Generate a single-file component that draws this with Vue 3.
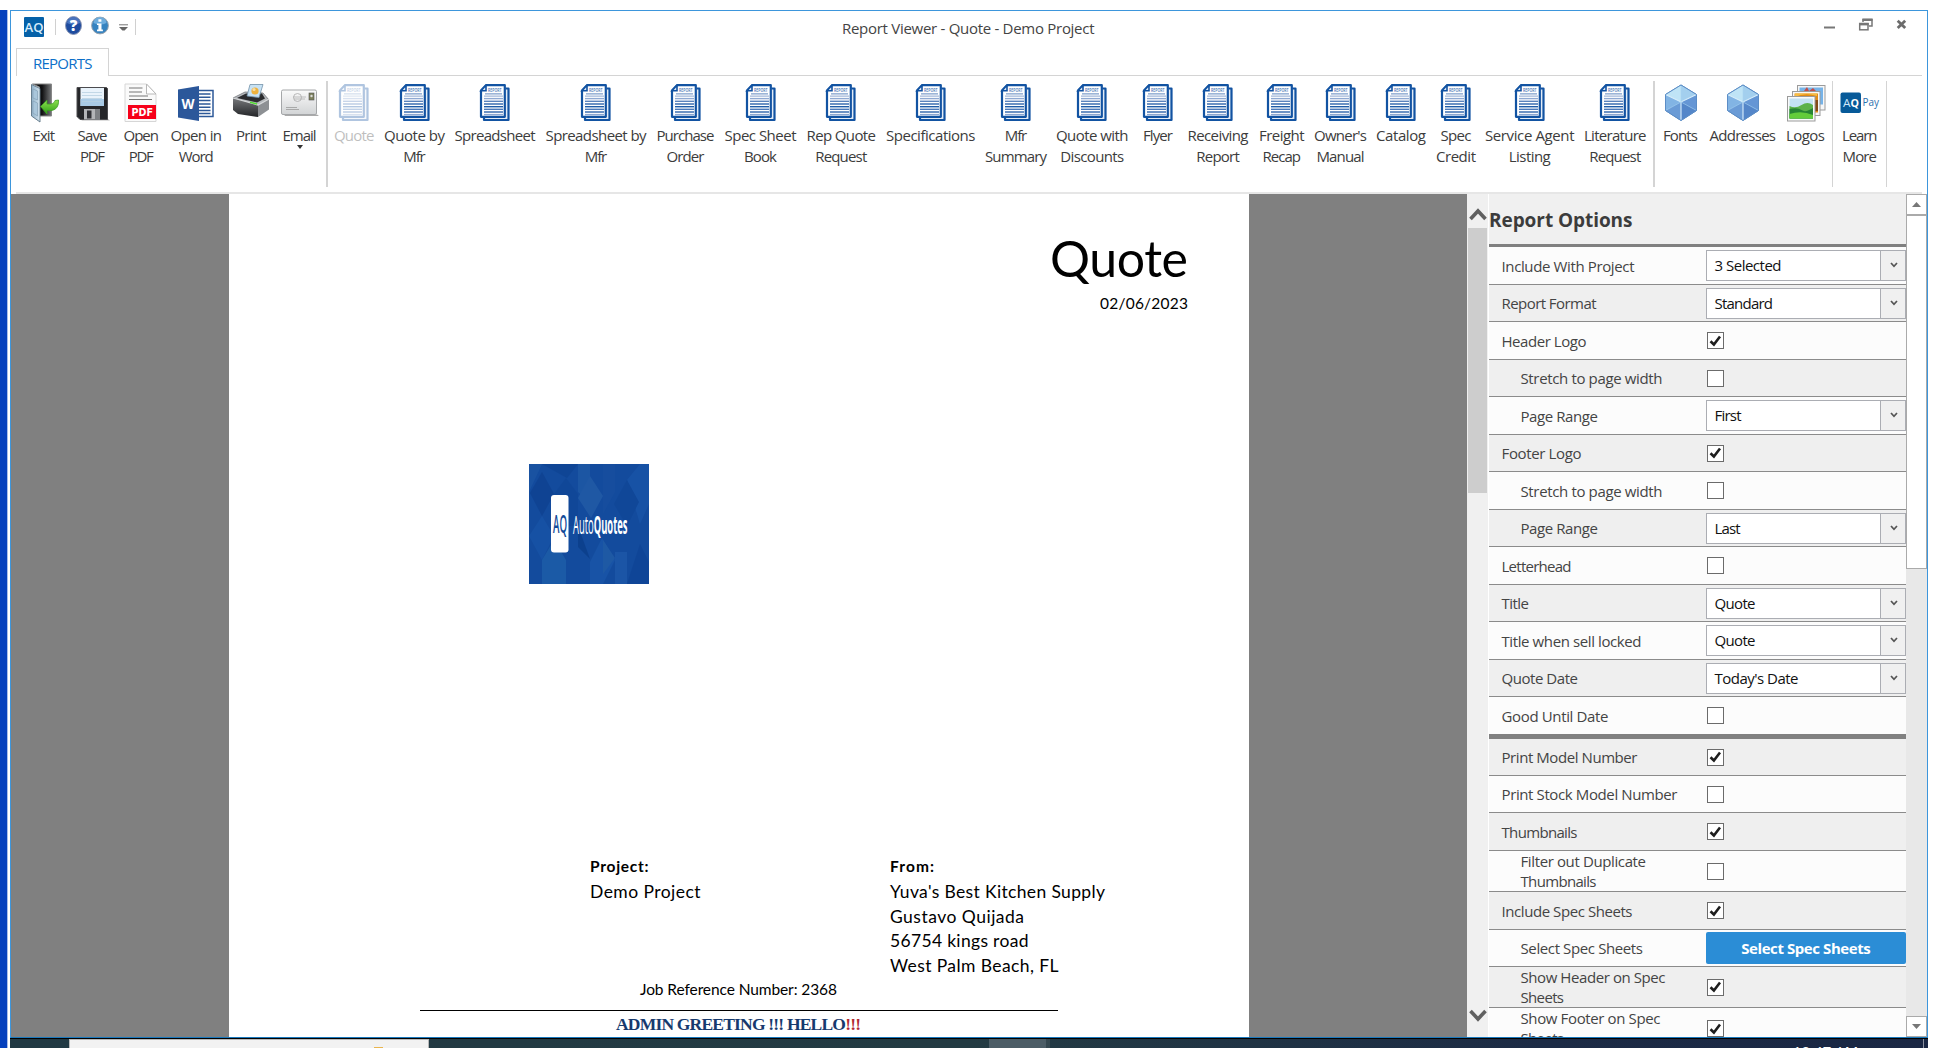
<script setup>
// Fits a line of text to a width in px by adjusting the letter spacing.
const vFit = {
  mounted(el, { value }) {
    if (!value) return
    const n = el.textContent.length
    const w = el.getBoundingClientRect().width
    const ls = (value - w) / Math.max(1, n - 1)
    el.style.letterSpacing = ls + 'px'
    el.style.marginRight = -ls + 'px'
  }
}

const raw = [
  { i: 'exit', x: 32.5, t: [['Exit', 22.5]] },
  { i: 'save', x: 77.5, t: [['Save', 30], ['PDF', 25]] },
  { i: 'pdf', x: 123.5, t: [['Open', 35.5], ['PDF', 25]] },
  { i: 'word', x: 170.5, t: [['Open in', 51.5], ['Word', 35]] },
  { i: 'print', x: 236, t: [['Print', 30.5]] },
  { i: 'mail', x: 282.5, t: [['Email', 34]], drop: true },
  { sep: 2, x: 326 },
  { i: 'report', x: 334, t: [['Quote', 40.5]], off: true },
  { i: 'report', x: 384, t: [['Quote by', 61], ['Mfr', 22.5]] },
  { i: 'report', x: 454.5, t: [['Spreadsheet', 81]] },
  { i: 'report', x: 545.5, t: [['Spreadsheet by', 101], ['Mfr', 22.5]] },
  { i: 'report', x: 656.5, t: [['Purchase', 58], ['Order', 38]] },
  { i: 'report', x: 724.5, t: [['Spec Sheet', 72], ['Book', 33]] },
  { i: 'report', x: 806.5, t: [['Rep Quote', 69.5], ['Request', 52]] },
  { i: 'report', x: 886, t: [['Specifications', 89.5]] },
  { i: 'report', x: 985, w: 62, t: [['Mfr', 22.5], ['Summary', 62]] },
  { i: 'report', x: 1056, t: [['Quote with', 72.5], ['Discounts', 64]] },
  { i: 'report', x: 1143, t: [['Flyer', 30]] },
  { i: 'report', x: 1187.5, t: [['Receiving', 61], ['Report', 43.5]] },
  { i: 'report', x: 1259, t: [['Freight', 45.5], ['Recap', 38.5]] },
  { i: 'report', x: 1314, t: [["Owner's", 53], ['Manual', 48]] },
  { i: 'report', x: 1376, t: [['Catalog', 50]] },
  { i: 'report', x: 1436, w: 40, t: [['Spec', 31], ['Credit', 40]] },
  { i: 'report', x: 1485, t: [['Service Agent', 89.5], ['Listing', 42]] },
  { i: 'report', x: 1584, t: [['Literature', 62.5], ['Request', 52]] },
  { sep: 2, x: 1653 },
  { i: 'cube', x: 1663, t: [['Fonts', 35]] },
  { i: 'cube', x: 1709.5, t: [['Addresses', 66.5]] },
  { i: 'logos', x: 1786, t: [['Logos', 39]] },
  { sep: 1, x: 1832 },
  { i: 'pay', x: 1842, t: [['Learn', 35.5], ['More', 34.5]] },
  { sep: 1, x: 1886 }
]
let edge = 11
const ribbon = raw.map(r => {
  const w = r.sep || r.w || r.t[0][1]
  const gap = r.x - edge
  edge = r.x + w
  return { ...r, width: w, gap }
})

const rows = [
  { h: 38, t: ['Include With Project'], w: [133], sel: '3 Selected', sw: 67 },
  { h: 37, t: ['Report Format'], w: [95], sel: 'Standard', sw: 58.5 },
  { h: 38, t: ['Header Logo'], w: [85], check: true },
  { h: 37, t: ['Stretch to page width'], w: [142], sub: true, check: false },
  { h: 38, t: ['Page Range'], w: [77.5], sub: true, sel: 'First', sw: 27 },
  { h: 37, t: ['Footer Logo'], w: [80], check: true },
  { h: 38, t: ['Stretch to page width'], w: [142], sub: true, check: false },
  { h: 37, t: ['Page Range'], w: [77.5], sub: true, sel: 'Last', sw: 26 },
  { h: 38, t: ['Letterhead'], w: [70], check: false },
  { h: 37, t: ['Title'], w: [27.5], sel: 'Quote', sw: 41 },
  { h: 38, t: ['Title when sell locked'], w: [140], sel: 'Quote', sw: 41 },
  { h: 37, t: ['Quote Date'], w: [76.5], sel: "Today's Date", sw: 84 },
  { h: 42, t: ['Good Until Date'], w: [107], check: false, thick: true },
  { h: 37, t: ['Print Model Number'], w: [136], check: true },
  { h: 37, t: ['Print Stock Model Number'], w: [176], check: false },
  { h: 38, t: ['Thumbnails'], w: [76], check: true },
  { h: 41, t: ['Filter out Duplicate', 'Thumbnails'], w: [125.5, 76], sub: true, check: false },
  { h: 38, t: ['Include Spec Sheets'], w: [131], check: true },
  { h: 37, t: ['Select Spec Sheets'], w: [122.5], sub: true, btn: true },
  { h: 41, t: ['Show Header on Spec', 'Sheets'], w: [145, 43.5], sub: true, check: true },
  { h: 42, t: ['Show Footer on Spec', 'Sheets'], w: [140, 43.5], sub: true, check: true }
].map((r, i) => ({ ...r, alt: i % 2 === 1 }))

const from = [["Yuva's Best Kitchen Supply", 215], ['Gustavo Quijada', 134], ['56754 kings road', 138.5], ['West Palm Beach, FL', 168.5]]

const textLines = [12, 14.6, 17.3, 20, 22.7, 25.3, 28, 30.6]
const lineTone = ['#5d86bd', '#8fa9d2', '#5a83bd', '#2d64ab', '#1f5ca8', '#4a79ba', '#2d64ab', '#8ba6d0']
</script>

<template>
  <div class="screen">
    <div class="above"></div>
    <div class="middle">
      <div class="desktop"></div>
      <div class="window">
        <header class="titlebar">
          <div class="quick">
            <svg class="app" width="20" height="20" viewBox="0 0 20 20">
              <rect width="20" height="20" rx="1" fill="#0561a8" />
              <text x="0.5" y="14.5" font-family="Open Sans, sans-serif" font-size="12.5" fill="#d6ecfb" textLength="19" lengthAdjust="spacingAndGlyphs" font-weight="600">AQ</text>
            </svg>
            <i class="qsep"></i>
            <svg class="help" width="17" height="19" viewBox="0 0 17 19">
              <ellipse cx="8.5" cy="9.5" rx="8" ry="9" fill="#1f4c9f" stroke="#8a96b4" />
              <path d="M2 7a6.5 6 0 0 1 13 0Q8 10 2 7Z" fill="#5d86cc" opacity=".7" />
              <text x="8.5" y="15" text-anchor="middle" font-family="Open Sans, sans-serif" font-weight="800" font-size="15" fill="#fff">?</text>
            </svg>
            <svg class="info" width="18" height="19" viewBox="0 0 18 19">
              <circle cx="9" cy="9.5" r="8.4" fill="#3683c0" stroke="#98a3ae" />
              <path d="M2.5 7a6.5 6 0 0 1 13 0Q9 10 2.5 7Z" fill="#7ab7e4" opacity=".8" />
              <path d="M7.4 3.2h3v2.6h-3zM6 7.4h4.5v6h1.4v1.8H6v-1.8h1.4V9.1H6z" fill="#fff" />
            </svg>
            <svg class="more" width="9" height="8" viewBox="0 0 9 8"><path d="M0 .8h9" stroke="#777" /><path d="M0 3h9L5.6 6.6H3.4z" fill="#666" /></svg>
            <i class="qsep q2"></i>
          </div>
          <span class="title"><span v-fit="252.5">Report Viewer - Quote - Demo Project</span></span>
          <div class="controls">
            <svg width="90" height="14" viewBox="0 0 90 14">
              <path d="M1 9.5h11" stroke="#777" stroke-width="2" />
              <path d="M40 4V1.5h9v6.5H46" fill="none" stroke="#777" stroke-width="1.5" /><path d="M39.5 1.8h10" stroke="#777" stroke-width="2.4" />
              <rect x="36.7" y="5.5" width="8.3" height="6.3" fill="#fff" stroke="#777" stroke-width="1.5" /><path d="M36 6.2h9.7" stroke="#777" stroke-width="2.4" />
              <path d="M74.7 2.8l7.5 7.2M82.2 2.8L74.7 10" stroke="#6c6c6c" stroke-width="2.8" />
            </svg>
          </div>
        </header>
        <div class="tabs">
          <div class="tab"><span v-fit="59.5">REPORTS</span></div>
          <div class="tabline"></div>
        </div>

        <nav class="ribbon">
          <template v-for="(r, k) in ribbon" :key="k">
            <i v-if="r.sep" class="sep" :style="{ width: r.width + 'px', marginLeft: r.gap + 'px' }"></i>
            <div v-else class="item" :class="{ off: r.off }" :style="{ width: r.width + 'px', marginLeft: r.gap + 'px' }">
              <svg v-if="r.i === 'report'" class="ic rep" width="32" height="38" viewBox="0 0 32 38">
                <path d="M5 33.5V36h24.5V4.5h-3" fill="#e4ecf6" stroke="#1253a2" stroke-width="2.2" stroke-linejoin="round" />
                <path d="M7 1.2h18.8v31.6H2V6.5z" fill="#fff" stroke="#1253a2" stroke-width="2.2" stroke-linejoin="round" />
                <path d="M7 1.2v5.5H2z" fill="#dce9f8" stroke="#1253a2" stroke-width="1.6" />
                <text x="9" y="8.3" font-family="Open Sans, sans-serif" font-weight="600" font-size="4.6" fill="#3d70b3" textLength="13.5" lengthAdjust="spacingAndGlyphs">REPORT</text>
                <path v-for="(y, n) in textLines" :key="n" :d="`M${n ? 5 : 6} ${n ? y : 9.9}h${n ? 19 : 17}`" :stroke="lineTone[n]" :stroke-width="n ? 1.4 : 1" />
                <path d="M5 12.1h19" stroke="#8aa5cf" stroke-width="1" />
              </svg>
              <svg v-else-if="r.i === 'exit'" class="ic" width="30" height="40" viewBox="0 0 30 40">
                <defs>
                  <linearGradient id="door" x1="0" x2="1" y1="0" y2="0"><stop offset="0" stop-color="#8fb0c8" /><stop offset="1" stop-color="#d3e3ee" /></linearGradient>
                  <linearGradient id="grn" x1="0" x2="0" y1="0" y2="1"><stop offset="0" stop-color="#8ee04e" /><stop offset="1" stop-color="#2da016" /></linearGradient>
                  <linearGradient id="room" x1="0" x2="1" y1="0" y2="0"><stop offset="0.5" stop-color="#101012" /><stop offset="1" stop-color="#77797b" /></linearGradient>
                </defs>
                <path d="M3.5 1h19v32h-12V4z" fill="url(#room)" stroke="#888" stroke-width="1" />
                <path d="M2.500 1.500l8.500 4v33.500l-8.500-6z" fill="url(#door)" stroke="#5c7485" stroke-width=".9" />
                <path d="M4 6l4.500 2v9l-4.500-2zM4 18l4.500 2v13l-4.500-3z" fill="#a9c6db" stroke="#7f9cb1" stroke-width=".6" />
                <path d="M11.500 23.500l6.500-6.500v4c5 .5 7-.5 8-3.500l3.500-.500c.5 8-4 11.500-11.500 10.500v3.500z" fill="url(#grn)" stroke="#3d9e23" stroke-width=".8" />
              </svg>
              <svg v-else-if="r.i === 'save'" class="ic" width="34" height="40" viewBox="0 0 34 40">
                <path d="M4 36h28l2 1.500H6z" fill="#bbb" />
                <path d="M1 4.500h29.500l1 1v31H4l-3-3z" fill="#252629" stroke="#4c4c4f" />
                <path d="M4.500 5h23.500v18H4.500z" fill="#e9f3fb" /><path d="M4.500 16h23.500v7H4.500z" fill="#a9cbe6" />
                <path d="M6 9.500h20M6 12.500h20M6 15.500h20M6 18.500h20" stroke="#b8d0e2" stroke-width=".8" />
                <path d="M8 26h16v10.500H8z" fill="#b3b5b8" /><path d="M11 27.500h4.500v8H11z" fill="#303136" /><path d="M19 26h5v10.500h-5z" fill="#7d8084" />
              </svg>
              <svg v-else-if="r.i === 'pdf'" class="ic" width="34" height="40" viewBox="0 0 34 40">
                <path d="M1 1h21.500L32 11v27.500H1z" fill="#fafafa" stroke="#d6d6d6" />
                <path d="M22.500 1v10H32z" fill="#fff" stroke="#b8b8b8" />
                <path d="M5 5h13.500M5 9h13M5 13h19M5 16.500h23" stroke="#777" stroke-width="1.100" />
                <rect x="4" y="22" width="28" height="14" fill="#f60019" />
                <text x="7.500" y="32.700" font-family="DejaVu Sans, sans-serif" font-weight="700" font-size="10" fill="#fff" textLength="21.500" lengthAdjust="spacingAndGlyphs">PDF</text>
              </svg>
              <svg v-else-if="r.i === 'word'" class="ic" width="36" height="40" viewBox="0 0 36 40">
                <rect x="19" y="7.500" width="16" height="26" fill="#fff" stroke="#2c5898" stroke-width="1.500" />
                <path d="M20 11h12.500M20 14.300h12.500M20 17.600h12.500M20 20.900h12.500M20 24.200h12.500M20 27.500h12.500M20 30.500h12.500" stroke="#2c5898" stroke-width="1.500" />
                <path d="M0 6.500L21 3v35L0 34.500z" fill="#2b579a" />
                <text x="3.500" y="25.500" font-family="Open Sans, sans-serif" font-weight="700" font-size="15" fill="#fff" textLength="13" lengthAdjust="spacingAndGlyphs">W</text>
              </svg>
              <svg v-else-if="r.i === 'print'" class="ic" width="38" height="40" viewBox="0 0 38 40">
                <defs><linearGradient id="pr" x1="0" x2="0" y1="0" y2="1"><stop offset="0" stop-color="#77797c" /><stop offset="1" stop-color="#232427" /></linearGradient></defs>
                <path d="M1 15l12-6 18 1 6 7-11 7z" fill="#b5b8bc" stroke="#75787c" stroke-width=".8" />
                <path d="M5 15l9-4.500h16l3 5-8 4z" fill="#2b2c2f" />
                <path d="M15 13l3-11.500h13l-4 13z" fill="#c7e2f5" stroke="#7392a8" stroke-width=".8" />
                <circle cx="23" cy="8" r="3.600" fill="#eeb23e" /><circle cx="22" cy="6.500" r="1.600" fill="#f7dda4" />
                <path d="M1 15l25 7v12L6 31l-5-4z" fill="url(#pr)" /><path d="M26 22l11-6v10.500L26 34z" fill="#8d9094" />
                <path d="M1 15l25 7 11-6" fill="none" stroke="#d7d9db" stroke-width="1.200" />
                <path d="M18 19.200l7 1.800" stroke="#51dc31" stroke-width="1.500" />
              </svg>
              <svg v-else-if="r.i === 'mail'" class="ic" width="38" height="40" viewBox="0 0 38 40">
                <defs><linearGradient id="ml" x1="0" x2="0" y1="0" y2="1"><stop offset="0" stop-color="#fafafa" /><stop offset="1" stop-color="#d2d4d6" /></linearGradient></defs>
                <path d="M3 31.500h33l2 1.500H4z" fill="#aaa" />
                <rect x="0.500" y="7" width="35" height="24.500" rx="1.500" fill="url(#ml)" stroke="#a5a7a9" />
                <rect x="28" y="10" width="5" height="7" fill="#7d805d" stroke="#555" stroke-width=".6" /><circle cx="30.500" cy="13" r="1.200" fill="#ddd" />
                <circle cx="16.500" cy="14.500" r="4" fill="none" stroke="#aaa" stroke-width=".8" /><path d="M12 14h13M13 16h11" stroke="#aaa" stroke-width=".7" />
                <path d="M5 24.500h11M5 26.500h13" stroke="#9a9a9a" stroke-width=".8" />
              </svg>
              <svg v-else-if="r.i === 'cube'" class="ic" width="34" height="40" viewBox="0 0 34 40">
                <path d="M17 2l15.500 9.500v16L17 37.500 1.500 27.500v-16z" fill="#79abe0" stroke="#5c8dc6" />
                <path d="M17 2l15.500 9.500L17 19 1.500 11.500z" fill="#a3cfee" /><path d="M17 2v17L1.500 11.500z" fill="#bfe4f6" />
                <path d="M1.500 11.500L17 19l-15.500 8.500z" fill="#82b4e4" /><path d="M1.500 27.500L17 19v18.500z" fill="#6a9bd6" />
                <path d="M32.500 11.500L17 19l15.500 8.500z" fill="#6596d5" /><path d="M32.500 27.500L17 19v18.500z" fill="#5486c9" />
                <path d="M1.500 11.500L17 19l15.500-7.500M17 19v18.500" fill="none" stroke="#d9effb" stroke-width="1.100" />
                <path d="M17 2v17L1.500 27.500M17 19l15.500 8.500" fill="none" stroke="#a8d3f1" stroke-width=".6" />
                <path d="M17 2l15.500 9.500v16L17 37.500 1.500 27.500v-16z" fill="none" stroke="#5c8dc6" stroke-width="1" />
              </svg>
              <svg v-else-if="r.i === 'logos'" class="ic" width="40" height="40" viewBox="0 0 40 40">
                <rect x="11.500" y="2.500" width="27.500" height="24.500" fill="#f7f7f7" stroke="#9b9b9b" /><rect x="13.500" y="4.500" width="23.500" height="17" fill="#76b3e8" /><path d="M18 8l3-4 2 4 4-3 3 3z" fill="#c24e4a" />
                <rect x="6.500" y="8.500" width="27.500" height="24" fill="#f7f7f7" stroke="#9b9b9b" /><rect x="8.500" y="10.500" width="23.500" height="19" fill="#e28b16" /><path d="M9 14q10-5 22-1v-2.500H9z" fill="#f7bd44" /><path d="M25 17h7v11h-6z" fill="#844a16" />
                <rect x="1.500" y="13.500" width="27.500" height="24.500" fill="#fafafa" stroke="#9b9b9b" /><rect x="3.500" y="15.500" width="23.500" height="20" fill="#c4e2f4" />
                <path d="M3.500 23q6 3 12-1t11.500 0v13.500H3.500z" fill="#5db24a" /><path d="M3.500 26q8-2 12 1t11.500-2v10.500H3.500z" fill="#278434" /><path d="M3.500 31q12-4 23.500 1v3.500H3.500z" fill="#63cc3a" />
              </svg>
              <svg v-else class="ic" width="40" height="40" viewBox="0 0 40 40">
                <rect x="0.500" y="9.500" width="20.500" height="20.500" rx="2" fill="#075a99" />
                <text x="3" y="23.500" font-family="Open Sans, sans-serif" font-size="10.500" fill="#cfe8fa" textLength="7.500" lengthAdjust="spacingAndGlyphs">A</text>
                <text x="10.500" y="23.500" font-family="Open Sans, sans-serif" font-weight="700" font-size="10.500" fill="#fff" textLength="8.500" lengthAdjust="spacingAndGlyphs">Q</text>
                <text x="22.500" y="23.300" font-family="Open Sans, sans-serif" font-size="10.500" fill="#2b6fae" textLength="16.500" lengthAdjust="spacingAndGlyphs">Pay</text>
              </svg>
              <div v-for="l in r.t" :key="l[0]" class="line"><span v-fit="l[1]">{{ l[0] }}</span></div>
              <svg v-if="r.drop" class="drop" width="6" height="4" viewBox="0 0 6 4"><path d="M0 0h6L3 4z" fill="#333" /></svg>
            </div>
          </template>
        </nav>
        <div class="ribbonline"></div>

        <main class="work">
          <section class="viewer">
            <article class="page">
              <div class="ptitle"><span v-fit="138">Quote</span></div>
              <div class="pdate"><span v-fit="88">02/06/2023</span></div>
              <svg class="brand" width="120" height="120" viewBox="0 0 120 120">
                <rect width="120" height="120" fill="#134b9d" />
                <g opacity=".5">
                  <path d="M0 0h13L0 28z" fill="#205aa6" /><path d="M13 8l12 22-12 22L1 29z" fill="#0c3c8b" /><path d="M13 0h36L38 14z" fill="#0c408f" />
                  <path d="M25 30l12-16 12 16v32H25z" fill="#0f4595" />
                  <path d="M49 0h12v38L49 28z" fill="#2662aa" /><path d="M61 12l13 20-12 22-13-20z" fill="#2c65ac" /><path d="M74 0h12v28L74 50z" fill="#1950a0" />
                  <path d="M98 16l13-16h9v40l-9 20z" fill="#1c59ae" /><path d="M98 16l12 22-12 24-13-22z" fill="#0e4495" />
                  <path d="M13 52l12 20-12 24L0 72z" fill="#1a58ab" /><path d="M25 76l12 20v24H13V96z" fill="#246aaf" /><path d="M49 62l12 33-12-12z" fill="#07367f" />
                  <path d="M73 74l13 22-12 24H61V98z" fill="#1d5caf" /><path d="M74 76l12 18-12 16z" fill="#2a67ac" /><path d="M86 88h12v32H86z" fill="#2360b0" /><path d="M111 80l9 18v22h-22z" fill="#0d4192" />
                </g>
                <rect x="22" y="31" width="17.500" height="57.500" rx="3" fill="#fff" />
                <text x="24" y="68.500" font-family="Open Sans, sans-serif" font-size="25" fill="#144b98" textLength="14" lengthAdjust="spacingAndGlyphs" font-weight="600">AQ</text>
                <text y="70" x="44" font-family="Open Sans, sans-serif" font-size="25" fill="#fff" textLength="54.500" lengthAdjust="spacingAndGlyphs"><tspan>Auto</tspan><tspan font-weight="700">Quotes</tspan></text>
              </svg>
              <div class="parties">
                <div class="proj"><div class="ph"><span v-fit="58.5">Project:</span></div><div class="pl"><span v-fit="110.5">Demo Project</span></div></div>
                <div class="from"><div class="ph"><span v-fit="44">From:</span></div><div v-for="f in from" :key="f[0]" class="pl"><span v-fit="f[1]">{{ f[0] }}</span></div></div>
              </div>
              <div class="job"><span v-fit="197">Job Reference Number: 2368</span></div>
              <div class="rule"></div>
              <div class="greet"><span v-fit="245">ADMIN GREETING !!! HELLO<b>!!!</b></span></div>
            </article>
          </section>
          <div class="vscroll">
            <svg class="vup" width="18" height="14" viewBox="0 0 18 14"><path d="M1.500 12L9 4l7.500 8" fill="none" stroke="#606060" stroke-width="3.600" /></svg>
            <div class="vthumb"></div>
            <svg class="vdown" width="18" height="14" viewBox="0 0 18 14"><path d="M1.500 2L9 10l7.500-8" fill="none" stroke="#606060" stroke-width="3.600" /></svg>
          </div>
          <aside class="options">
            <h2><span v-fit="143.500">Report Options</span></h2>
            <div v-for="(r, k) in rows" :key="k" class="row" :class="{ alt: r.alt, thick: r.thick }" :style="{ height: r.h + 'px' }">
              <div class="label" :class="{ sub: r.sub, two: r.t.length > 1, short: r.h === 37 }"><div v-for="(l, n) in r.t" :key="n"><span v-fit="r.w[n]">{{ l }}</span></div></div>
              <div v-if="r.sel" class="select"><div class="val"><span v-fit="r.sw">{{ r.sel }}</span></div><div class="arr"><svg width="8" height="6" viewBox="0 0 8 6"><path d="M1 1l3 3.300L7 1" fill="none" stroke="#555" stroke-width="1.700" /></svg></div></div>
              <div v-else-if="r.btn" class="btn"><span v-fit="129.500">Select Spec Sheets</span></div>
              <div v-else class="check"><svg v-if="r.check" width="13" height="12" viewBox="0 0 13 12"><path d="M1.500 6.200l3.400 3.300L11 1.500" fill="none" stroke="#1e1e1e" stroke-width="2.600" /></svg></div>
            </div>
          </aside>
          <div class="pscroll">
            <div class="pbtn"><svg width="9" height="5" viewBox="0 0 9 5"><path d="M0 5h9L4.500 0z" fill="#777" /></svg></div>
            <div class="pthumb"></div>
            <div class="pbtn last"><svg width="9" height="5" viewBox="0 0 9 5"><path d="M0 0h9L4.500 5z" fill="#777" /></svg></div>
          </div>
        </main>
      </div>
    </div>
    <footer class="taskbar">
      <div class="tdesk"></div>
      <div class="tbar"><div class="search"><i></i></div><div class="tact"></div><div class="tsep"></div><div class="clock">10:47 AM</div><div class="tend"></div></div>
    </footer>
  </div>
</template>

<style>
body { margin: 0; overflow: hidden; background: #fff; }
</style>
<style scoped>
* { box-sizing: border-box; }
.screen { width: 1938px; height: 1048px; overflow: hidden; display: flex; flex-direction: column; font: 15px/21px "Open Sans", "Noto Sans", sans-serif; color: #444; background: #fff; }
span { display: inline-block; white-space: nowrap; }
svg { display: block; flex: none; }
.above { height: 10px; flex: none; }
.middle { display: flex; height: 1028px; flex: none; }
.desktop { width: 10px; background: #0540bd; border-right: 2px solid #fff; box-shadow: inset -1px 0 #a9bde8; flex: none; }
.window { width: 1918px; height: 1028px; border: 1px solid #3d96dc; border-bottom-color: #1878bd; display: flex; flex-direction: column; overflow: hidden; }
.titlebar { height: 37px; display: flex; position: relative; flex: none; }
.quick { display: flex; align-items: flex-start; padding-left: 13px; width: 831px; }
.app { margin-top: 6px; }
.qsep { width: 1px; height: 16px; background: #d0d0d0; margin: 8px 0 0 11px; }
.help { margin: 5px 0 0 9px; }
.info { margin: 5px 0 0 9px; }
.more { margin: 13px 0 0 10px; }
.q2 { margin-left: 7px; }
.title { margin-top: 7px; }
.controls { margin: 7px 0 0 auto; width: 104px; }
.tabs { display: flex; height: 28px; padding: 0 5px; flex: none; }
.tab { width: 93px; border: 1px solid #d4d4d4; border-bottom: 0; padding: 4px 0 0 16px; color: #0c6fc8; }
.tabline { flex: 1; border-bottom: 1px solid #d4d4d4; }
.ribbon { display: flex; height: 116px; flex: none; }
.sep { height: 106px; margin-top: 5px; background: #d4d4d4; flex: none; }
.item { display: flex; flex-direction: column; align-items: center; padding-top: 7px; flex: none; }
.ic { height: 40px; margin-bottom: 2px; }
.rep { height: 38px; margin: 1px 0 3px; }
.off { opacity: .33; }
.line { height: 21px; display: flex; justify-content: center; color: #3c3c3c; }
.drop { margin-top: -1px; }
.ribbonline { height: 2px; margin: 0 5px; background: #e6e6e6; flex: none; }
.work { display: flex; height: 843px; flex: none; }
.viewer { width: 1456px; background: #808080; padding-left: 218px; flex: none; }
.page { width: 1020px; height: 843px; background: #fff; overflow: hidden; font-family: Lato, "Open Sans", sans-serif; color: #000; font-size: 17px; display: flex; flex-direction: column; }
.ptitle { height: 60px; line-height: 60px; font-size: 50px; margin-top: 34px; padding-right: 61px; text-align: right; flex: none; }
.pdate { height: 20px; line-height: 20px; font-size: 15.500px; margin-top: 5px; padding-right: 61px; text-align: right; flex: none; }
.brand { margin: 151px 0 0 300px; }
.parties { display: flex; margin-top: 270px; height: 126px; padding-left: 361px; flex: none; }
.proj { width: 300px; }
.ph { font-weight: 700; font-size: 15.500px; height: 26px; line-height: 25px; }
.pl { height: 24.700px; line-height: 24.700px; font-size: 17.500px; }
.job { padding-left: 411px; font-size: 15.500px; line-height: 20px; height: 31px; margin-top: -1px; flex: none; }
.rule { width: 638px; height: 1px; background: #000; margin: 0 0 4px 191px; flex: none; }
.greet { padding-left: 387px; font: 700 17.500px/18px "Liberation Serif", serif; color: #173a6e; white-space: nowrap; }
.greet b { color: #b22a33; }
.vscroll { width: 22px; background: #f0f0f0; border-right: 1px solid #fff; display: flex; flex-direction: column; align-items: center; flex: none; }
.vup { margin-top: 13px; }
.vthumb { width: 19px; height: 265px; background: #cdcdcd; margin-top: 7px; }
.vdown { margin-top: auto; margin-bottom: 14px; }
.options { width: 417px; background: #f0f0f0; overflow: hidden; flex: none; }
h2 { margin: 0; height: 53px; padding: 14px 0 0 0; font-size: 19px; line-height: 24px; border-bottom: 3px solid #808080; color: #3c3c3c; }
.row { display: flex; align-items: center; background: #fcfcfc; border-bottom: 1px solid #8b8b8b; }
.row.alt { background: #efefef; }
.row.thick { border-bottom: 5px solid #818181; }
.label { width: 217px; padding: 2px 0 0 12.500px; flex: none; }
.label.sub { padding-left: 31.500px; }
.label.short { padding-top: 0; }
.label.two { line-height: 20px; padding-top: 0; margin-top: -1px; }
.select { width: 200px; height: 31px; border: 1px solid #abadb3; background: #fff; display: flex; color: #111; flex: none; }
.val { width: 174px; border-right: 1px solid #abadb3; padding: 4px 0 0 7.500px; }
.arr { flex: 1; background: #f0f0f0; display: flex; justify-content: center; padding: 11px 0 0 1px; }
.btn { width: 200px; height: 32px; border-radius: 2px; background: #2b8dd6; color: #fff; font-weight: 700; display: flex; justify-content: center; align-items: center; }
.check { width: 17px; height: 17px; margin-left: 1px; border: 1px solid #6b6b6b; background: #fff; display: flex; align-items: center; justify-content: center; }
.pscroll { width: 21px; background: #e8e8e8; display: flex; flex-direction: column; flex: none; }
.pbtn { height: 21px; background: #fff; border: 1px solid #aaa; display: flex; align-items: center; justify-content: center; flex: none; }
.pthumb { height: 354px; background: #fff; border: 1px solid #aaa; }
.pbtn.last { margin-top: auto; }
.taskbar { height: 10px; display: flex; flex: none; }
.tdesk { width: 10px; background: #0540bd; border-right: 2px solid #fff; box-shadow: inset -1px 0 #a9bde8; }
.tbar { width: 1918px; border-top: 1px solid #000; background: linear-gradient(90deg, #213943, #233b43 50%, #1c2b45 80%, #1a2744); display: flex; overflow: hidden; }
.search { width: 360px; margin-left: 59px; background: #f2f2f2; border: 1px solid #b8b8b8; border-bottom: 0; }
.search i { display: block; width: 9px; height: 1px; margin: 7px 0 0 304px; background: #eab54f; }
.tact { width: 57px; margin-left: 560px; background: #4c5d66; }
.tsep { width: 4px; background: #34474f; }
.clock { margin: 4px 0 0 743px; color: #fff; font-size: 15px; line-height: 17px; width: 62px; white-space: nowrap; }
.tend { width: 1px; background: #8b91a0; margin-left: auto; margin-right: 4px; }
</style>
